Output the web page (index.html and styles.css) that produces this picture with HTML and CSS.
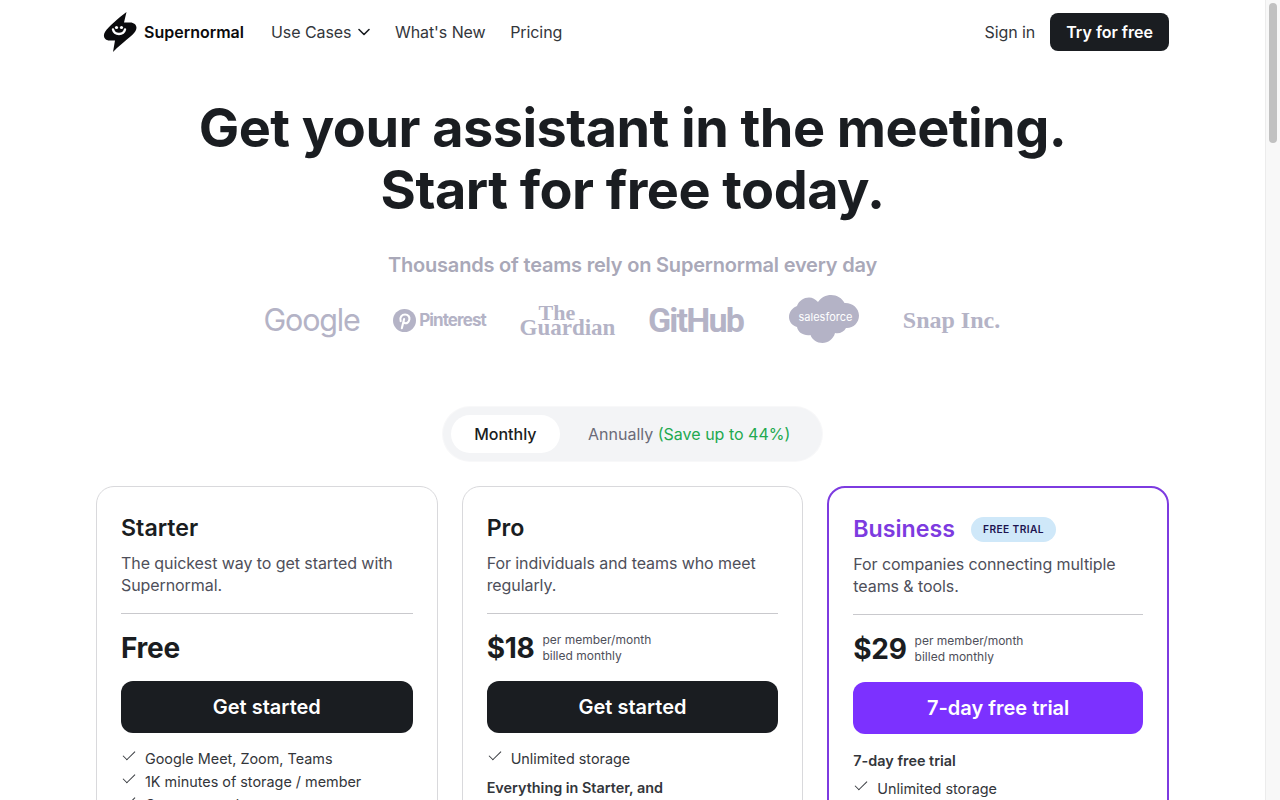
FILE: index.html
```html
<!DOCTYPE html>
<html lang="en">
<head>
    <meta charset="UTF-8">
    <meta name="viewport" content="width=device-width, initial-scale=1.0">
    <title>Supernormal Pricing</title>
    <link rel="stylesheet" href="styles.css">
</head>
<body>
    <header class="topbar">
        <nav class="nav-left">
            <a class="brand" href="#">
                <svg class="brand-mark" viewBox="0 0 34 40" width="34" height="40">
                    <path d="M23.500 0 L21 10.500 H27 C32.500 10.500 35 15 32.500 19 C30 23.500 21 29 10 40 L12 28.500 H6.500 C1.500 28.500 -0.500 24 2 20 C5.500 14.500 15 6.500 23.500 0 Z" fill="#0b0b0d"/>
                    <path d="M10 17.500 C11.500 23.500 20.500 23.500 22 17.500" fill="none" stroke="#fff" stroke-width="2.400" stroke-linecap="round"/>
                    <circle cx="13.500" cy="15.500" r="1.600" fill="#fff"/>
                    <circle cx="18.500" cy="15.500" r="1.600" fill="#fff"/>
                </svg>
                <span>Supernormal</span>
            </a>
            <a class="nav-link" href="#">Use Cases
                <svg class="chevron" viewBox="0 0 12 8" width="12" height="8"><path d="M1 1.500 L6 6.500 L11 1.500" fill="none" stroke="#1a1d21" stroke-width="1.600" stroke-linecap="round" stroke-linejoin="round"/></svg>
            </a>
            <a class="nav-link" href="#">What's New</a>
            <a class="nav-link" href="#">Pricing</a>
        </nav>
        <div class="nav-right">
            <a class="nav-link" href="#">Sign in</a>
            <a class="btn-try" href="#">Try for free</a>
        </div>
    </header>

    <main>
        <h1>Get your assistant in the meeting.<br>Start for free today.</h1>
        <p class="trusted">Thousands of teams rely on Supernormal every day</p>

        <div class="logos">
            <div class="logo logo-google">Google</div>
            <div class="logo logo-pinterest">
                <svg viewBox="0 0 24 24" width="23" height="23"><circle cx="12" cy="12" r="12" fill="#b4b3c6"/><path d="M9.200 20 L11.600 10.500 M8 12.600 C6.500 8.600 9.400 5.800 12.600 5.800 C15.800 5.800 17.600 8 17.100 10.900 C16.600 13.800 14.200 15.600 12.200 14.600 C11.400 14.200 11 13.600 10.900 13" fill="none" stroke="#fff" stroke-width="2.200" stroke-linecap="round"/></svg>
                <span>Pinterest</span>
            </div>
            <div class="logo logo-guardian"><span>The</span><span>Guardian</span></div>
            <div class="logo logo-github">GitHub</div>
            <div class="logo logo-salesforce">
                <svg viewBox="0 0 70 50" width="70" height="50">
                    <path d="M29 7 C32 2.500 37 0 42 0 C48 0 53 3 55.500 8 C63 7.500 70 13 70 20.500 C70 28 64 33.500 57 33 C55 37 50.500 39 46 38 C44.500 44 39 48 33.500 48 C28 48 23 44.500 21.500 40 C14.500 41 9 37.500 8 32 C2.500 30.500 0 26 0 22 C0 16.500 4 12.500 8 11 C10 5.500 15 2.500 20 2.500 C23.500 2.500 26.500 4.300 29 7 Z" fill="#b4b3c6"/>
                </svg>
                <span>salesforce</span>
            </div>
            <div class="logo logo-snap">Snap Inc.</div>
        </div>

        <div class="toggle">
            <span class="toggle-on">Monthly</span>
            <span class="toggle-off">Annually <em>(Save up to 44%)</em></span>
        </div>

        <section class="plans">
            <article class="plan">
                <h2>Starter</h2>
                <p class="plan-desc">The quickest way to get started with Supernormal.</p>
                <hr>
                <div class="price"><strong>Free</strong></div>
                <a class="plan-btn" href="#">Get started</a>
                <ul class="features">
                    <li>Google Meet, Zoom, Teams</li>
                    <li>1K minutes of storage / member</li>
                    <li>Custom templates</li>
                    <li>AI meeting summaries</li>
                </ul>
            </article>

            <article class="plan">
                <h2>Pro</h2>
                <p class="plan-desc">For individuals and teams who meet regularly.</p>
                <hr>
                <div class="price"><strong>$18</strong><span>per member/month<br>billed monthly</span></div>
                <a class="plan-btn" href="#">Get started</a>
                <ul class="features">
                    <li>Unlimited storage</li>
                </ul>
                <p class="features-title">Everything in Starter, and</p>
                <ul class="features">
                    <li>Custom templates</li>
                </ul>
            </article>

            <article class="plan plan-business">
                <div class="plan-head">
                    <h2>Business</h2>
                    <span class="badge">FREE TRIAL</span>
                </div>
                <p class="plan-desc">For companies connecting multiple teams &amp; tools.</p>
                <hr>
                <div class="price"><strong>$29</strong><span>per member/month<br>billed monthly</span></div>
                <a class="plan-btn" href="#">7-day free trial</a>
                <p class="features-trial">7-day free trial</p>
                <ul class="features">
                    <li>Unlimited storage</li>
                    <li>Integrations</li>
                </ul>
            </article>
        </section>
    </main>

    <div class="scrollbar"><div class="scrollbar-thumb"></div></div>
</body>
</html>
```

FILE: styles.css
```css
* {
    box-sizing: border-box;
}

body {
    font-family: Inter, sans-serif;
    color: #1a1d21;
    background-color: white;
    margin: 0;
    padding-right: 15px;
}

a {
    color: inherit;
    text-decoration: none;
}

.scrollbar {
    position: fixed;
    top: 0;
    right: 0;
    bottom: 0;
    width: 15px;
    padding: 3px 3px 0 3px;
    background-color: #f8f8f8;
    border-left: 1px solid #ececec;
}

.scrollbar-thumb {
    height: 140px;
    background-color: #c1c1c1;
    border-radius: 4px;
}

.topbar {
    display: flex;
    justify-content: space-between;
    align-items: center;
    width: 1073px;
    height: 64px;
    margin: 0 auto;
}

.nav-left {
    display: flex;
    align-items: center;
}

.nav-right {
    display: flex;
    align-items: center;
    gap: 15px;
}

.brand {
    display: flex;
    align-items: center;
    gap: 7px;
    margin-left: 7px;
    margin-right: 27px;
    font-size: 16px;
    font-weight: 600;
    color: #0b0b0d;
}

.nav-link {
    display: flex;
    align-items: center;
    gap: 7px;
    margin-right: 24.500px;
    font-size: 16px;
    letter-spacing: -0.07px;
    color: #33363b;
}

.nav-right .nav-link {
    margin-right: 0;
}

.btn-try {
    padding: 9px 16px;
    background-color: #1a1d21;
    border-radius: 8px;
    color: white;
    font-size: 16px;
    font-weight: 600;
    line-height: 20px;
}

main {
    width: 1073px;
    margin: 0 auto;
    text-align: center;
}

h1 {
    margin: 33px 0 0;
    font-size: 54px;
    font-weight: 700;
    line-height: 62px;
    letter-spacing: -0.54px;
}

.trusted {
    margin: 30px 0 0;
    font-size: 20px;
    font-weight: 600;
    line-height: 28px;
    letter-spacing: -0.2px;
    color: #a9a8b8;
}

.logos {
    display: flex;
    justify-content: center;
    align-items: center;
    gap: 32px;
    height: 64px;
    margin-top: 9px;
}

.logo {
    display: flex;
    justify-content: center;
    align-items: center;
    width: 96px;
    color: #b4b3c6;
}

.logo-google {
    margin: -2px 0 0 -2px;
    font-size: 30.500px;
    letter-spacing: -1.200px;
}

.logo-pinterest {
    gap: 3px;
    font-size: 17px;
    font-weight: 700;
    letter-spacing: -0.9px;
}

.logo-guardian {
    flex-direction: column;
    align-items: flex-start;
    font-family: "Liberation Serif", serif;
    font-weight: 700;
    font-size: 23px;
    line-height: 15px;
}

.logo-guardian span:first-child {
    margin-left: 19px;
    font-size: 22px;
}

.logo-github {
    font-family: Roboto, sans-serif;
    font-size: 34px;
    font-weight: 700;
    letter-spacing: -1.800px;
}

.logo-salesforce {
    position: relative;
}

.logo-salesforce span {
    position: absolute;
    margin: -6px 0 0 4px;
    font-size: 11px;
    color: white;
}

.logo-snap {
    font-family: "Liberation Serif", serif;
    font-size: 24px;
    font-weight: 700;
    white-space: nowrap;
}

.toggle {
    display: flex;
    align-items: center;
    width: fit-content;
    height: 54px;
    margin: 55px auto 0;
    padding: 0 8px;
    background-color: #f3f4f6;
    border-radius: 27px;
    box-shadow: 0 0 0 1px #f8f8f9;
    font-size: 16px;
    line-height: 38px;
}

.toggle-on {
    padding: 0 23.500px;
    background-color: white;
    border-radius: 19px;
    font-weight: 500;
}

.toggle-off {
    padding: 0 24px 0 28px;
    font-weight: 400;
    color: #6b6b78;
}

.toggle-off em {
    font-style: normal;
    color: #22a94f;
}

.plans {
    display: grid;
    grid-template-columns: repeat(3, 1fr);
    gap: 24px;
    margin-top: 25px;
    text-align: left;
}

.plan {
    height: 900px;
    padding: 25px 24px 24px;
    border: 1px solid #d9d9dc;
    border-radius: 18px;
}

.plan-business {
    border: 2px solid #7d3be0;
}

.plan h2 {
    margin: 0;
    font-size: 23.200px;
    font-weight: 600;
    line-height: 32px;
}

.plan-head {
    display: flex;
    align-items: center;
    gap: 16px;
}

.plan-business h2 {
    color: #7d3be0;
}

.badge {
    padding: 0 12px;
    background-color: #cfe8f9;
    border-radius: 13px;
    color: #1c1450;
    font-size: 10.200px;
    font-weight: 600;
    line-height: 25px;
    letter-spacing: 0.4px;
}

.plan-desc {
    margin: 8px 0 0;
    font-size: 16px;
    line-height: 22px;
    letter-spacing: -0.08px;
    color: #4e4f5a;
}

.plan hr {
    margin: 17px 0 0;
    border: 0;
    border-top: 1px solid #c9c9cd;
}

.price {
    display: flex;
    align-items: center;
    gap: 8px;
    height: 34px;
    margin-top: 17px;
}

.price strong {
    font-size: 28px;
    font-weight: 700;
    letter-spacing: -0.3px;
}

.price span {
    font-size: 12px;
    line-height: 16px;
    color: #4e4f5a;
}

.plan-btn {
    display: block;
    height: 52px;
    margin-top: 16px;
    background-color: #1a1d21;
    border-radius: 12px;
    color: white;
    font-size: 20px;
    font-weight: 600;
    line-height: 52px;
    text-align: center;
}

.plan-business .plan-btn {
    background-color: #7c31ff;
}

.features {
    list-style: none;
    margin: 14px 0 0;
    padding: 0;
}

.features li {
    position: relative;
    padding-left: 24px;
    font-size: 14.400px;
    line-height: 23px;
    color: #33363b;
}

.features li::before {
    content: "";
    position: absolute;
    left: 2px;
    top: 4px;
    width: 11px;
    height: 5px;
    border-left: 1px solid #33363b;
    border-bottom: 1px solid #33363b;
    transform: rotate(-45deg);
}

.features-title,
.features-trial {
    margin: 8px 0 0;
    font-size: 14.400px;
    font-weight: 600;
    line-height: 20px;
    color: #33363b;
}

.features-trial {
    margin-top: 17px;
}

.features-trial + .features,
.features-title + .features {
    margin-top: 6px;
}
```
